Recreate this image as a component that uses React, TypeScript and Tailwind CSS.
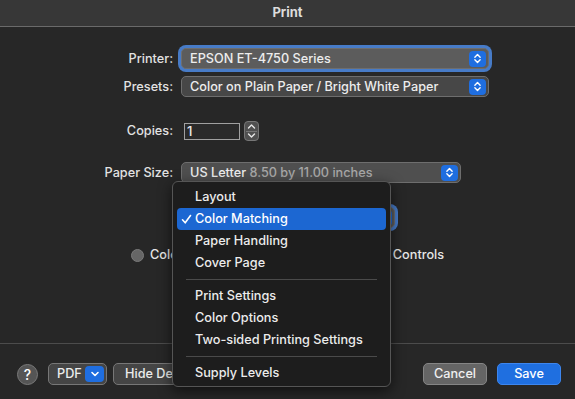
import React from "react";

const font = { fontFamily: "Inter, 'Noto Sans', sans-serif" };

function UpDown({ size = 16 }: { size?: number }) {
  return (
    <svg width={size} height={size} viewBox="0 0 16 16" fill="none">
      <path d="M5.2 6.6 L8 3.8 L10.8 6.6" stroke="white" strokeWidth="1.5" strokeLinecap="round" strokeLinejoin="round" />
      <path d="M5.2 9.4 L8 12.2 L10.8 9.4" stroke="white" strokeWidth="1.5" strokeLinecap="round" strokeLinejoin="round" />
    </svg>
  );
}

function Popup({
  children,
  width,
  bg,
  focused = false,
}: {
  children: React.ReactNode;
  width: string;
  bg: string;
  focused?: boolean;
}) {
  return (
    <div
      className={`relative h-[21px] ${width} ${bg} rounded-[5px] border border-[#6e6e6e] flex items-center pl-[8px] text-[12.7px] font-medium text-[#ededed] ${
        focused ? "shadow-[0_0_0_3px_rgba(80,145,240,0.8)]" : ""
      }`}
    >
      <span className="flex-1 whitespace-nowrap overflow-hidden">{children}</span>
      <div className="w-[17px] h-[16px] mr-[2px] rounded-[4px] bg-[#1f6ee0] flex items-center justify-center">
        <UpDown size={15} />
      </div>
    </div>
  );
}

function Label({ children }: { children: React.ReactNode }) {
  return (
    <div className="w-[173px] text-right text-[12.7px] font-medium text-[#e2e2e2] whitespace-nowrap">{children}</div>
  );
}

function MenuItem({ children, active = false }: { children: React.ReactNode; active?: boolean }) {
  return (
    <div
      className={`h-[22px] mx-[4px] rounded-[4px] flex items-center pl-[18px] text-[12.7px] font-medium relative ${
        active ? "bg-[#1c67d2] text-white" : "text-[#ececec]"
      }`}
    >
      {active && (
        <svg className="absolute left-[4px] top-[6px]" width="11" height="11" viewBox="0 0 11 11" fill="none">
          <path d="M1.5 5.8 L4.2 8.8 L9.5 1.5" stroke="white" strokeWidth="1.6" strokeLinecap="round" strokeLinejoin="round" />
        </svg>
      )}
      {children}
    </div>
  );
}

function Sep() {
  return (
    <div className="h-[11px] flex items-center px-[13px]">
      <div className="h-px w-full bg-[#4a4a4a]" />
    </div>
  );
}

export default function App() {
  return (
    <div className="relative w-[575px] h-[399px] bg-[#272727] overflow-hidden" style={font}>
      {/* Title bar */}
      <div className="h-[27px] bg-[#373737] border-b border-[#6a6a6a] flex items-center justify-center">
        <span className="text-[13px] font-bold text-[#dcdcdc]">Print</span>
      </div>

      {/* Printer */}
      <div className="mt-[21px] flex items-center gap-[8px]">
        <Label>Printer:</Label>
        <Popup width="w-[308px]" bg="bg-[#5c5c5c]" focused>
          EPSON ET-4750 Series
        </Popup>
      </div>

      {/* Presets */}
      <div className="mt-[7px] flex items-center gap-[8px]">
        <Label>Presets:</Label>
        <Popup width="w-[308px]" bg="bg-[#474747]">
          Color on Plain Paper / Bright White Paper
        </Popup>
      </div>

      {/* Copies */}
      <div className="mt-[24px] h-[20px] flex items-center gap-[8px]">
        <Label>Copies:</Label>
        <div className="ml-[3px] w-[56px] h-[17px] bg-[#2a2a2a] border border-[#a0a0a0] text-[13px] font-medium text-[#ececec] leading-[15px] pl-[2px]">
          1
        </div>
        <div className="ml-[-4px] w-[15px] h-[20px] rounded-[4px] bg-[#505050] border border-[#777] flex flex-col items-center justify-between py-[1px]">
          <svg width="9" height="7" viewBox="0 0 9 7" fill="none">
            <path d="M1.5 5 L4.5 2 L7.5 5" stroke="#e8e8e8" strokeWidth="1.4" strokeLinecap="round" strokeLinejoin="round" />
          </svg>
          <div className="h-px w-[11px] bg-[#777]" />
          <svg width="9" height="7" viewBox="0 0 9 7" fill="none">
            <path d="M1.5 2 L4.5 5 L7.5 2" stroke="#e8e8e8" strokeWidth="1.4" strokeLinecap="round" strokeLinejoin="round" />
          </svg>
        </div>
      </div>

      {/* Paper Size */}
      <div className="mt-[21px] flex items-center gap-[8px]">
        <Label>Paper Size:</Label>
        <Popup width="w-[280px]" bg="bg-[#4f4f4f]">
          US Letter <span className="text-[#a8a8a8]">8.50 by 11.00 inches</span>
        </Popup>
      </div>

      {/* Panel popup (behind menu) */}
      <div className="mt-[24px] flex items-center gap-[8px]">
        <div className="w-[173px]" />
        <Popup width="w-[214px]" bg="bg-[#5c5c5c]" focused>
          {" "}
        </Popup>
      </div>

      {/* Radio row */}
      <div className="mt-[17px] h-[20px] flex items-center pl-[131px] text-[12.7px] font-medium text-[#e6e6e6]">
        <div className="w-[13px] h-[13px] rounded-full bg-[#666] border border-[#7a7a7a]" />
        <span className="ml-[6px] w-[141px] whitespace-nowrap">ColorSync</span>
        <div className="w-[13px] h-[13px] rounded-full bg-[#666] border border-[#7a7a7a]" />
        <span className="ml-[6px] whitespace-nowrap">
          EPSON Color <span>Controls</span>
        </span>
      </div>

      {/* Separator */}
      <div className="mt-[78px] h-px bg-[#4c4c4c]" />

      {/* Bottom buttons */}
      <div className="mt-[19px] h-[22px] flex items-center pl-[17px] pr-[14px]">
        <div className="w-[21px] h-[21px] rounded-full bg-[#555] border border-[#7a7a7a] flex items-center justify-center text-[14px] font-medium text-white">
          ?
        </div>
        <div className="ml-[10px] w-[59px] h-[22px] rounded-[5px] bg-[#454545] border border-[#777] flex items-center pl-[8px] text-[12.7px] font-medium text-[#ececec]">
          <span className="flex-1">PDF</span>
          <div className="w-[19px] h-[16px] mr-[2px] rounded-[4px] bg-[#1f6ee0] flex items-center justify-center">
            <svg width="10" height="8" viewBox="0 0 10 8" fill="none">
              <path d="M2 2.5 L5 5.5 L8 2.5" stroke="white" strokeWidth="1.6" strokeLinecap="round" strokeLinejoin="round" />
            </svg>
          </div>
        </div>
        <div className="ml-[6px] h-[22px] px-[11px] rounded-[5px] bg-[#454545] border border-[#777] flex items-center text-[12.7px] font-medium text-[#ececec] whitespace-nowrap">
          Hide Details
        </div>
        <div className="flex-1" />
        <div className="w-[64px] h-[22px] rounded-[5px] bg-[#656565] border border-[#858585] flex items-center justify-center text-[12.7px] font-medium text-[#f0f0f0]">
          Cancel
        </div>
        <div className="ml-[10px] w-[64px] h-[22px] rounded-[5px] bg-[#1f6fe0] border border-[#3d86ee] flex items-center justify-center text-[12.7px] font-medium text-white">
          Save
        </div>
      </div>

      {/* Open menu */}
      <div className="absolute left-[172px] top-[181px] w-[219px] h-[206px] rounded-[6px] bg-[#1d1d1d] border border-[#555] shadow-[0_4px_14px_rgba(0,0,0,0.6)] pt-[4px]">
        <MenuItem>Layout</MenuItem>
        <MenuItem active>Color Matching</MenuItem>
        <MenuItem>Paper Handling</MenuItem>
        <MenuItem>Cover Page</MenuItem>
        <Sep />
        <MenuItem>Print Settings</MenuItem>
        <MenuItem>Color Options</MenuItem>
        <MenuItem>Two-sided Printing Settings</MenuItem>
        <Sep />
        <MenuItem>Supply Levels</MenuItem>
      </div>
    </div>
  );
}
